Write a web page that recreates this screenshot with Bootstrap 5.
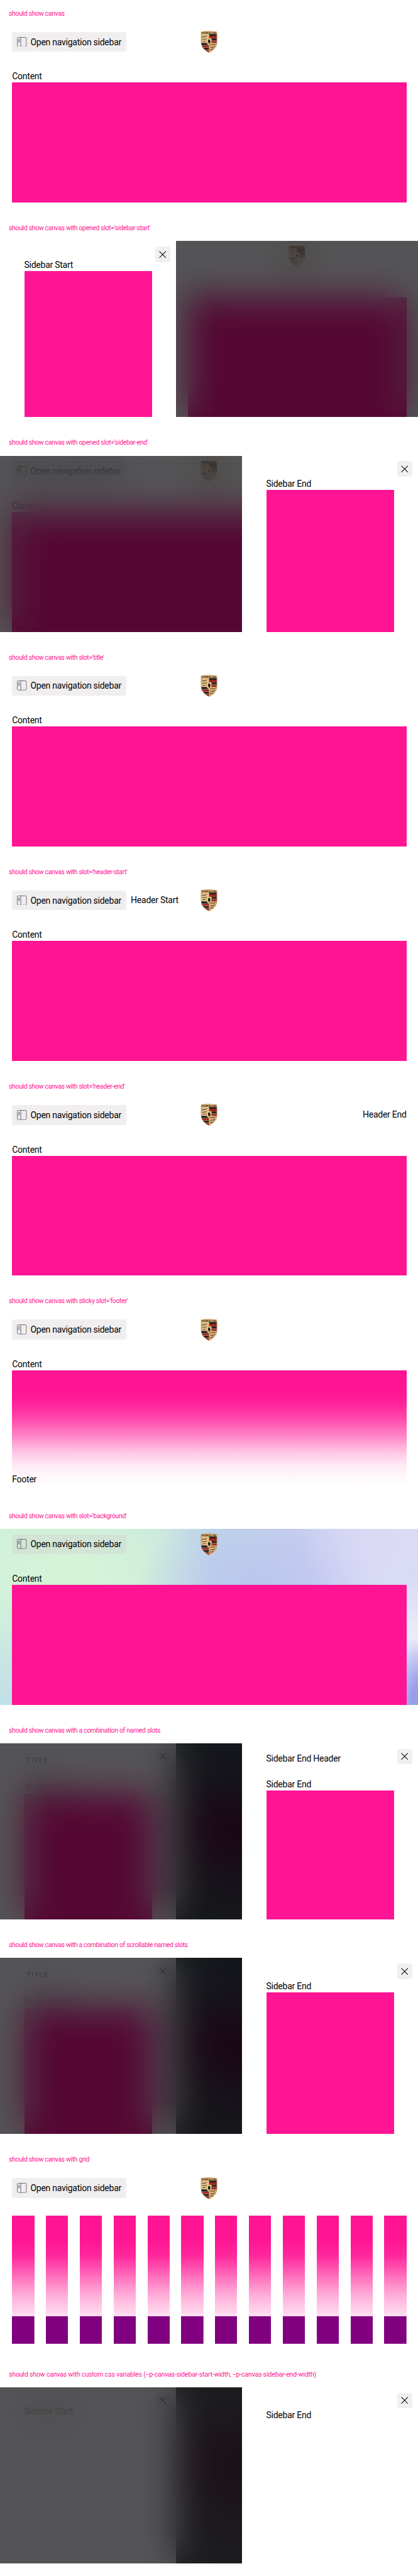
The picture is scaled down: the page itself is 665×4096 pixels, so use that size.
<!DOCTYPE html>
<html lang="en">
<head>
<meta charset="utf-8">
<meta name="viewport" content="width=device-width, initial-scale=1">
<title>Canvas</title>
<link rel="stylesheet" href="https://cdn.jsdelivr.net/npm/bootstrap@5.3.0/dist/css/bootstrap.min.css">
<style>
:root{font-size:14px}
body{font-family:Roboto,"Liberation Sans",sans-serif;font-size:1rem;line-height:1.5rem;letter-spacing:-.018em;color:#010205;background:#fff;overflow-x:hidden}
.story{height:24.375rem}
.story-name{height:3rem;padding:.125rem 0 0 1rem;font-size:.75rem;line-height:2.9rem;letter-spacing:-.033em;color:#ff1493;white-space:nowrap}
.story-name.long{letter-spacing:-.0146em}
.stage{height:20rem}
.main-pane{padding:0 1.3125rem 0 1.375rem}
.main-pane>.line,.drawer>.line{padding-top:1px;line-height:calc(1.5rem - 1px)}
.pane-shifted{margin-left:20rem}
.topbar{height:4.875rem;padding-top:.625rem;display:grid;grid-template-columns:1fr auto 1fr;align-items:start}
.topbar>div{height:2.25rem}
.nav-toggle{--bs-btn-font-size:1rem;--bs-btn-line-height:1.5rem;height:2.25rem;padding:1px .58rem 0;border:0;border-radius:.25rem;background:rgba(210,205,208,.34);letter-spacing:inherit;gap:.38rem;color:#010205}
.nav-toggle svg{width:1.125rem;height:1.125rem;margin-top:-1px}
.crest{width:1.9375rem;height:2.5rem;margin-top:-.125rem;display:block}
.block{background:#ff1493}
.fade-block{background:linear-gradient(rgb(255 20 147) 15%,rgb(255 20 147/.97) 24%,rgb(255 20 147/.9) 31%,rgb(255 20 147/.76) 41%,rgb(255 20 147/.53) 54%,rgb(255 20 147/.34) 63%,rgb(255 20 147/.23) 69%,rgb(255 20 147/.09) 79%,rgb(255 20 147/.025) 90%,rgb(255 20 147/0) 98%)}
.foot{left:1.375rem;bottom:.5rem}
.cols{display:grid;grid-template-columns:repeat(12,1fr);column-gap:1.325rem}
.cols div{height:14.5625rem;background:linear-gradient(purple,purple) bottom/100% 3.125rem no-repeat,linear-gradient(rgb(255 20 147) 2.6rem,rgb(255 20 147/.92) 4.5rem,rgb(255 20 147/.75) 5.9rem,rgb(255 20 147/.52) 7.6rem,rgb(255 20 147/.33) 9.2rem,rgb(255 20 147/.18) 10.9rem,rgb(255 20 147/.13) 11.44rem)}
.aurora{background:
 radial-gradient(ellipse 4rem 8rem at 101% 100%,#9a9cec 30%,#9a9cec00 100%),
 radial-gradient(ellipse 5rem 7rem at 100% 64%,#f1eefc,#f1eefc00),
 radial-gradient(ellipse 9rem 9rem at 91% 9%,#dbdaf6,#dbdaf600),
 radial-gradient(ellipse 13rem 9rem at 60% 34%,#b9c6ec,#b9c6ec00),
 radial-gradient(ellipse 8rem 8rem at 76% 25%,#c9caf1,#c9caf100),
 radial-gradient(ellipse 16rem 10rem at 17% 26%,#d6f5d6,#d6f5d600),
 linear-gradient(#c9e7e000 40%,#c0e0e8 100%),
 linear-gradient(90deg,#cfeedd 0,#cbe9df 35%,#bfd4ea 52%,#c6d0ef 72%,#d8dcf2 90%)}
.veil-blur{inset:0;backdrop-filter:blur(28px);
 -webkit-mask-image:linear-gradient(90deg,rgb(0 0 0/.86) 0,#000 9%,#000 89%,rgb(0 0 0/.78) 100%),linear-gradient(rgb(0 0 0/.78) 0,rgb(0 0 0/.91) 15%,#000 33%,#000 82%,rgb(0 0 0/.8) 100%);
 -webkit-mask-composite:source-in;mask-composite:intersect}
.veil-tint{inset:0;background:rgba(1,2,4,.674)}
.drawer{top:0;width:20rem;height:20rem;background:#fff;padding:0 2.75rem}
.drawer.from-start{left:0;padding-right:2.7rem}
.drawer.from-end{left:27.5rem;padding-right:2.75rem}
.drawer .x{top:.625rem;right:.625rem;width:1.75rem;height:1.75rem;border-radius:.25rem;background:#f0f0f0}
.x svg{width:.8125rem;height:.8125rem}
.t31{padding-top:1.9375rem}.t38{padding-top:2.375rem}.t67{padding-top:4.1875rem}.t62{padding-top:3.875rem}
.slot-title{top:1.2rem;left:3rem;font-size:.8125rem;letter-spacing:.12em}
.slot-head{top:1rem;left:2.75rem}
</style>
</head>
<body>
<svg width="0" height="0" class="position-absolute overflow-visible" aria-hidden="true">
<defs>
<linearGradient id="gold" x1="0" y1="0" x2="1" y2="1"><stop offset="0" stop-color="#d2a764"/><stop offset=".4" stop-color="#efcf96"/><stop offset="1" stop-color="#c99a55"/></linearGradient>
<clipPath id="shield"><path d="M.4 2.100C8 0 22 0 29.600 2.100V20c0 9-5.500 15-14.600 19.600C5.900 35 .4 29 .4 20z"/></clipPath>
</defs>
<symbol id="side" viewBox="0 0 18 18"><rect x=".5" y=".5" width="16.6" height="17" rx="2.4" fill="none" stroke="#55565a" stroke-width="1"/><path d="M6.9.5v17" stroke="#55565a"/><path d="M2.600 4.500h2.200M2.600 6.700h2.200M2.600 8.900h2.200" stroke="#222" stroke-width="1.1"/></symbol>
<symbol id="cross" viewBox="0 0 13 13"><path d="M.6.6l11.800 11.800M12.400.6L.6 12.400" fill="none" stroke="#010205" stroke-width="1.15"/></symbol>
<symbol id="crest" viewBox="0 0 30 40"><g clip-path="url(#shield)"><path fill="url(#gold)" d="M0 0h30v40H0z"/>
<path fill="#252021" d="M15 6h14v3H15zM15 14h14v3.600H15zM1 22h14v4H1zM1 30.500h14v3.500H1z"/><path fill="#9d2429" d="M15 9h14v4.600H15zM15 18.500h14v3.500H15zM1 26.500h14v3.500H1zM3 34.500h12V39H3z"/>
<path fill="none" stroke="#2c221b" stroke-width="1.100" d="M2 12q2-2 4-1.300T11.500 9M2.500 16.500q2-2 4-1.300T10.500 13.500M3.500 20q1.500-1.500 3-1T9 18M17 26.500q2.500-2.500 4.500-1.500t5-1M17 31q2-2 4-1.300t4.500-1.500M16.500 35q1.500-1.500 3-1.200t3-1.300"/>
<path d="M15 6v33" stroke="#b98a4a" stroke-width=".6"/>
<path fill="#e9c88e" stroke="#ab7b3e" stroke-width=".6" d="M10.500 14q4.500-1.500 9 0v6q0 4-4.500 6.500-4.500-2.500-4.500-6.500z"/>
<path fill="#17120f" d="M13.200 17l1.800-1.500 1.700.8-.6 1 1.700 1.200-.3 2.300-1.500.4.600 2-1.500 1-.6-2.700-1.900-.700.900-.9z"/>
<text x="15" y="5.600" text-anchor="middle" textLength="26" lengthAdjust="spacingAndGlyphs" font-size="4.200" font-weight="700" letter-spacing="0" fill="#3b2a17">PORSCHE</text></g>
<path fill="none" stroke="#a87b45" stroke-width=".7" d="M.6 2.300C8 .3 22 .3 29.400 2.300V20c0 9-5.400 14.800-14.400 19.300C6 34.800.6 29 .6 20z"/></symbol>
</svg>

<section class="story"><div class="story-name">should show canvas</div>
<div class="stage position-relative overflow-hidden"><div class="main-pane h-100 d-flex flex-column">
<header class="topbar"><div><button class="btn nav-toggle d-inline-flex align-items-center"><svg><use href="#side"/></svg>Open navigation sidebar</button></div><svg class="crest"><use href="#crest"/></svg><div></div></header>
<div class="line">Content</div><div class="block flex-grow-1"></div></div></div></section>

<section class="story"><div class="story-name">should show canvas with opened slot='sidebar-start'</div>
<div class="stage position-relative overflow-hidden"><div class="main-pane pane-shifted h-100 d-flex flex-column">
<header class="topbar"><div></div><svg class="crest"><use href="#crest"/></svg><div></div></header>
<div class="line">Content</div><div class="block flex-grow-1"></div></div>
<div class="veil-blur position-absolute"></div><div class="veil-tint position-absolute"></div>
<aside class="drawer from-start position-absolute d-flex flex-column t31"><div class="line">Sidebar Start</div><div class="block flex-grow-1"></div><span class="x position-absolute d-flex align-items-center justify-content-center"><svg><use href="#cross"/></svg></span></aside></div></section>

<section class="story"><div class="story-name">should show canvas with opened slot='sidebar-end'</div>
<div class="stage position-relative overflow-hidden"><div class="main-pane h-100 d-flex flex-column">
<header class="topbar"><div><button class="btn nav-toggle d-inline-flex align-items-center"><svg><use href="#side"/></svg>Open navigation sidebar</button></div><svg class="crest"><use href="#crest"/></svg><div></div></header>
<div class="line">Content</div><div class="block flex-grow-1"></div></div>
<div class="veil-blur position-absolute"></div><div class="veil-tint position-absolute"></div>
<aside class="drawer from-end position-absolute d-flex flex-column t38"><div class="line">Sidebar End</div><div class="block flex-grow-1"></div><span class="x position-absolute d-flex align-items-center justify-content-center"><svg><use href="#cross"/></svg></span></aside></div></section>

<section class="story"><div class="story-name">should show canvas with slot='title'</div>
<div class="stage position-relative overflow-hidden"><div class="main-pane h-100 d-flex flex-column">
<header class="topbar"><div><button class="btn nav-toggle d-inline-flex align-items-center"><svg><use href="#side"/></svg>Open navigation sidebar</button></div><svg class="crest"><use href="#crest"/></svg><div></div></header>
<div class="line">Content</div><div class="block flex-grow-1"></div></div></div></section>

<section class="story"><div class="story-name">should show canvas with slot='header-start'</div>
<div class="stage position-relative overflow-hidden"><div class="main-pane h-100 d-flex flex-column">
<header class="topbar"><div class="d-flex align-items-center gap-2"><button class="btn nav-toggle d-inline-flex align-items-center"><svg><use href="#side"/></svg>Open navigation sidebar</button><span>Header Start</span></div><svg class="crest"><use href="#crest"/></svg><div></div></header>
<div class="line">Content</div><div class="block flex-grow-1"></div></div></div></section>

<section class="story"><div class="story-name">should show canvas with slot='header-end'</div>
<div class="stage position-relative overflow-hidden"><div class="main-pane h-100 d-flex flex-column">
<header class="topbar"><div><button class="btn nav-toggle d-inline-flex align-items-center"><svg><use href="#side"/></svg>Open navigation sidebar</button></div><svg class="crest"><use href="#crest"/></svg><div class="d-flex align-items-center justify-content-end">Header End</div></header>
<div class="line">Content</div><div class="block flex-grow-1"></div></div></div></section>

<section class="story"><div class="story-name">should show canvas with sticky slot='footer'</div>
<div class="stage position-relative overflow-hidden"><div class="main-pane h-100 d-flex flex-column">
<header class="topbar"><div><button class="btn nav-toggle d-inline-flex align-items-center"><svg><use href="#side"/></svg>Open navigation sidebar</button></div><svg class="crest"><use href="#crest"/></svg><div></div></header>
<div class="line">Content</div><div class="fade-block flex-grow-1"></div></div><div class="foot position-absolute">Footer</div></div></section>

<section class="story"><div class="story-name">should show canvas with slot='background'</div>
<div class="stage aurora position-relative overflow-hidden"><div class="main-pane h-100 d-flex flex-column">
<header class="topbar"><div><button class="btn nav-toggle d-inline-flex align-items-center"><svg><use href="#side"/></svg>Open navigation sidebar</button></div><svg class="crest"><use href="#crest"/></svg><div></div></header>
<div class="line">Content</div><div class="block flex-grow-1"></div></div></div></section>

<section class="story"><div class="story-name">should show canvas with a combination of named slots</div>
<div class="stage aurora position-relative overflow-hidden"><div class="main-pane pane-shifted h-100 d-flex flex-column">
<header class="topbar"><div></div><svg class="crest"><use href="#crest"/></svg><div></div></header>
<div class="line">Content</div><div class="fade-block flex-grow-1"></div></div><div class="foot position-absolute pane-shifted">Footer</div>
<div class="veil-blur position-absolute"></div><div class="veil-tint position-absolute"></div>
<aside class="drawer from-start position-absolute d-flex flex-column t67"><div class="slot-title position-absolute">TITLE</div><div class="line">Sidebar Start</div><div class="block flex-grow-1"></div><span class="x position-absolute d-flex align-items-center justify-content-center"><svg><use href="#cross"/></svg></span></aside>
<div class="veil-blur position-absolute"></div><div class="veil-tint position-absolute"></div>
<aside class="drawer from-end position-absolute d-flex flex-column t62"><div class="slot-head position-absolute">Sidebar End Header</div><div class="line">Sidebar End</div><div class="block flex-grow-1"></div><span class="x position-absolute d-flex align-items-center justify-content-center"><svg><use href="#cross"/></svg></span></aside></div></section>

<section class="story"><div class="story-name">should show canvas with a combination of scrollable named slots</div>
<div class="stage aurora position-relative overflow-hidden"><div class="main-pane pane-shifted h-100 d-flex flex-column">
<header class="topbar"><div></div><svg class="crest"><use href="#crest"/></svg><div></div></header>
<div class="line">Content</div><div class="fade-block flex-grow-1"></div></div><div class="foot position-absolute pane-shifted">Footer</div>
<div class="veil-blur position-absolute"></div><div class="veil-tint position-absolute"></div>
<aside class="drawer from-start position-absolute d-flex flex-column t67"><div class="slot-title position-absolute">TITLE</div><div class="line">Sidebar Start</div><div class="block flex-grow-1"></div><span class="x position-absolute d-flex align-items-center justify-content-center"><svg><use href="#cross"/></svg></span></aside>
<div class="veil-blur position-absolute"></div><div class="veil-tint position-absolute"></div>
<aside class="drawer from-end position-absolute d-flex flex-column t38"><div class="line">Sidebar End</div><div class="block flex-grow-1"></div><span class="x position-absolute d-flex align-items-center justify-content-center"><svg><use href="#cross"/></svg></span></aside></div></section>

<section class="story"><div class="story-name">should show canvas with grid</div>
<div class="stage position-relative overflow-hidden"><div class="main-pane h-100">
<header class="topbar"><div><button class="btn nav-toggle d-inline-flex align-items-center"><svg><use href="#side"/></svg>Open navigation sidebar</button></div><svg class="crest"><use href="#crest"/></svg><div></div></header>
<div class="cols"><div></div><div></div><div></div><div></div><div></div><div></div><div></div><div></div><div></div><div></div><div></div><div></div></div></div></div></section>

<section class="story"><div class="story-name long">should show canvas with custom css variables (--p-canvas-sidebar-start-width, --p-canvas-sidebar-end-width)</div>
<div class="stage position-relative overflow-hidden"><div class="main-pane pane-shifted h-100 d-flex flex-column">
<header class="topbar"><div></div><svg class="crest"><use href="#crest"/></svg><div></div></header>
<div class="fade-block flex-grow-1 opacity-50"></div></div>
<div class="veil-blur position-absolute"></div><div class="veil-tint position-absolute"></div>
<aside class="drawer from-start position-absolute t31"><div class="line">Sidebar Start</div><span class="x position-absolute d-flex align-items-center justify-content-center"><svg><use href="#cross"/></svg></span></aside>
<div class="veil-blur position-absolute"></div><div class="veil-tint position-absolute"></div>
<aside class="drawer from-end position-absolute t38"><div class="line">Sidebar End</div><span class="x position-absolute d-flex align-items-center justify-content-center"><svg><use href="#cross"/></svg></span></aside></div></section>
<script src="https://cdn.jsdelivr.net/npm/bootstrap@5.3.0/dist/js/bootstrap.bundle.min.js"></script>
</body>
</html>
